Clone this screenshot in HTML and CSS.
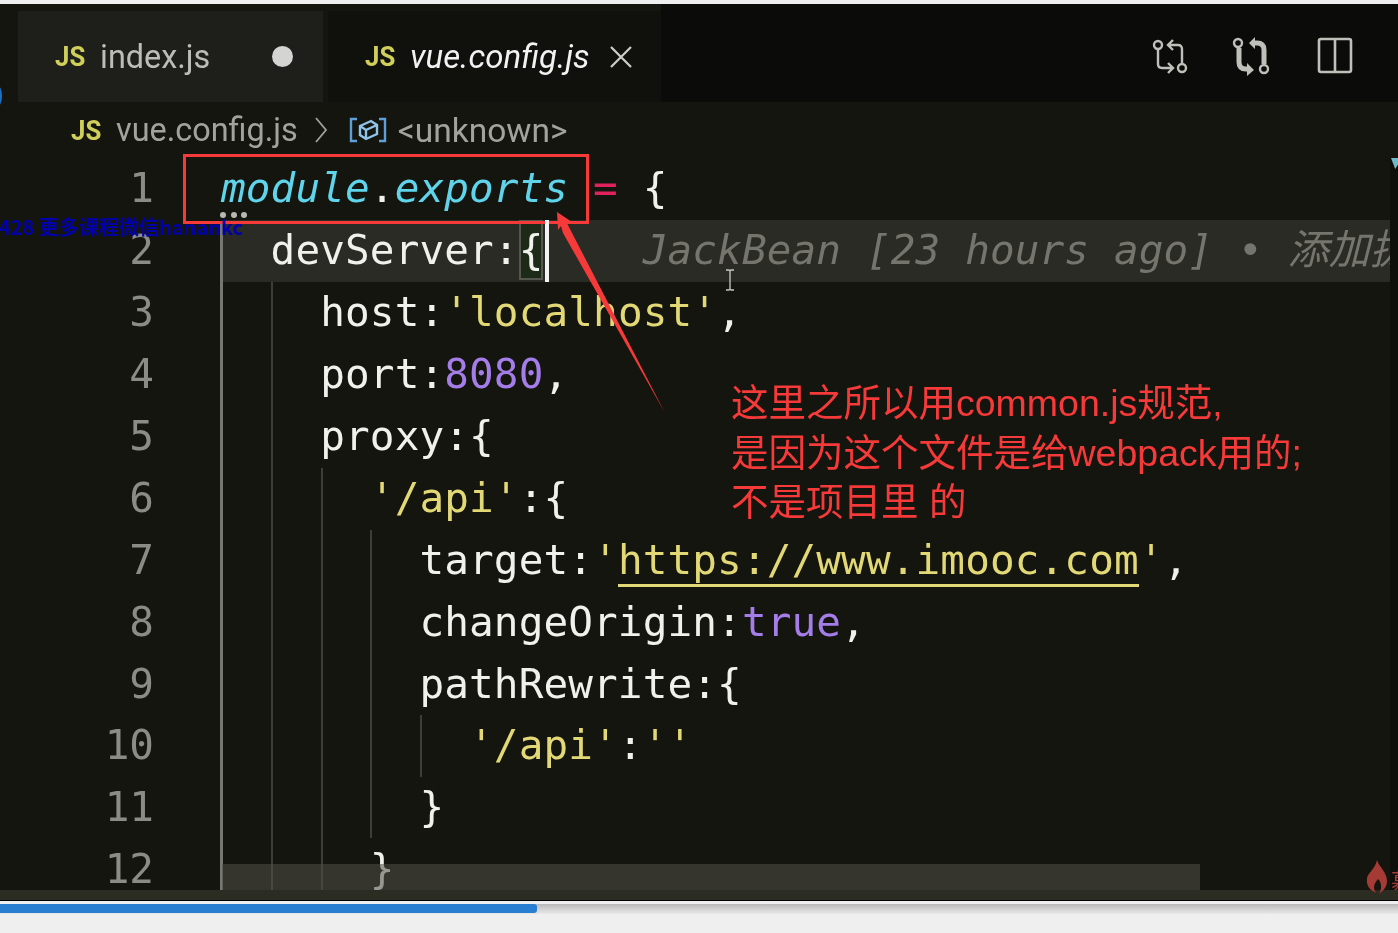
FILE: index.html
```html
<!DOCTYPE html>
<html lang="zh">
<head>
<meta charset="utf-8">
<title>vue.config.js</title>
<link rel="stylesheet" href="styles.css">
</head>
<body>
<main class="player">
  <section class="video">
    <header class="tabbar">
      <div class="tab tab-dirty">
        <span class="js">JS</span><span class="tab-name">index.js</span><span class="dot"></span>
      </div>
      <div class="tab tab-active">
        <span class="js">JS</span><span class="tab-name active-name">vue.config.js</span>
        <svg class="close" viewBox="0 0 24 24"><path d="M2 2 22 22M22 2 2 22"/></svg>
      </div>
      <div class="actions">
        <svg class="act" viewBox="0 0 36 36"><circle cx="5" cy="7" r="4"/><circle cx="29" cy="30" r="4"/><path d="M5 11V26Q5 30 9 30H20M15 25l5 5-5 5M29 26V11Q29 7 25 7H15M20 2l-5 5 5 5"/></svg>
        <svg class="act act-bold" viewBox="2 0 36 36"><circle class="thin" cx="5" cy="5" r="4"/><circle class="thin" cx="31" cy="31" r="4"/><path d="M6 10V24Q6 31 13 31H15M31 26V12Q31 5 24 5H22"/><path class="solid" d="M14 25 21 32 14 38ZM22 -1 16 5 22 11Z"/></svg>
        <svg class="act act-split" viewBox="0 0 36 36"><rect x="2" y="1" width="32" height="33" rx="2"/><path d="M18 1V34"/></svg>
      </div>
    </header>
    <nav class="crumbs">
      <span class="js">JS</span><span class="crumb-file">vue.config.js</span>
      <svg class="chev" viewBox="0 0 14 28"><path d="M2 2 12 14 2 26"/></svg>
      <svg class="sym" viewBox="0 0 38 26"><path class="sym-b" d="M8 2H2V24H8M30 2H36V24H30"/><path class="sym-c" d="M11 9 22 4 28 8V17L17 22 11 18ZM11 9 17 13 28 8M17 13V22"/></svg>
      <span class="crumb-sym">&lt;unknown&gt;</span>
    </nav>
    <div class="editor">
      <ol class="code">
        <li class="line"><span class="num">1</span><code><i class="mod">module</i><b class="pun">.</b><i class="mod">exports</i> <span class="eq">=</span> {</code></li>
        <li class="line line-cur"><span class="num">2</span><code>  devServer:<span class="brace">{</span><span class="ghost">    JackBean [23 hours ago] • 添加拢</span></code></li>
        <li class="line"><span class="num">3</span><code>    host:<span class="str">'localhost'</span>,</code></li>
        <li class="line"><span class="num">4</span><code>    port:<span class="val">8080</span>,</code></li>
        <li class="line"><span class="num">5</span><code>    proxy:{</code></li>
        <li class="line"><span class="num">6</span><code>      <span class="str">'/api'</span>:{</code></li>
        <li class="line"><span class="num">7</span><code>        target:<span class="str">'<u>https://www.imooc.com</u>'</span>,</code></li>
        <li class="line"><span class="num">8</span><code>        changeOrigin:<span class="val">true</span>,</code></li>
        <li class="line"><span class="num">9</span><code>        pathRewrite:{</code></li>
        <li class="line"><span class="num">10</span><code>          <span class="str">'/api'</span>:<span class="str">''</span></code></li>
        <li class="line"><span class="num">11</span><code>        }</code></li>
        <li class="line"><span class="num">12</span><code>      }</code></li>
      </ol>
      <div class="guide g0"></div>
      <div class="guide g1"></div>
      <div class="guide g2"></div>
      <div class="guide g3"></div>
      <div class="guide g4"></div>
      <div class="hscroll"></div>
      <div class="minimap"><span class="speck"></span></div>
    </div>
    <div class="statusbar"></div>

    <div class="redbox"></div>
    <div class="dots"><i></i><i></i><i></i></div>
    <div class="caret"></div>
    <svg class="ibeam" viewBox="0 0 10 22"><path d="M1 1H4Q5 1 5 3V19Q5 21 4 21H1M9 1H6Q5 1 5 3V19Q5 21 6 21H9"/></svg>
    <svg class="arrow" viewBox="0 0 1398 933"><path d="M557 212 572 222 567.4 224 664.5 412 563 233 561 226 558 230Z"/></svg>
    <p class="note">这里之所以用common.js规范,<br>是因为这个文件是给webpack用的;<br>不是项目里 的</p>
    <div class="mark">428 更多课程微信hanankc</div>
    <svg class="flame" viewBox="0 0 22 34"><path d="M11 0C13 7 21 12 21 21 21 27 17 31 13 34 16 29 16 23 12 19 9 23 6 27 10 33 4 30 0 26 1 18 2 13 9 9 11 0Z"/></svg>
    <div class="flame-txt">慕</div>
    <div class="blue-edge"></div>
  </section>
  <div class="progress"><div class="progress-fill"></div></div>
</main>
</body>
</html>
```
FILE: styles.css
```css
* { box-sizing: border-box; }
html, body { margin: 0; padding: 0; }
body { width: 1398px; height: 933px; background: #efefef; overflow: hidden; font-family: Roboto, "Noto Sans", sans-serif; }
.player { display: flex; flex-direction: column; height: 933px; padding-top: 4px; background: #efefef; }
.video { position: relative; height: 897px; background: #14150f; border-bottom: 1px solid #000; overflow: hidden; display: flex; flex-direction: column; filter: blur(.4px); }

.tabbar { display: flex; height: 98px; padding: 7px 0 0 18px; background: #14150f; flex: none; }
.tab { display: flex; align-items: center; height: 91px; font-size: 33px; }
.tab-dirty { width: 305px; padding: 0 30px 0 37px; background: #1e1f1a; color: #bdbdb7; font-size: 32.4px; }
.tab-active { width: 333px; margin-left: 5px; padding-left: 37px; background: #10110d; color: #f2f2f2; }
.tab-name { margin-left: 18px; }
.active-name { font-style: italic; }
.dot { width: 21px; height: 21px; border-radius: 50%; background: #d4d4d2; margin-left: auto; }
.close { width: 24px; height: 24px; margin-left: 19px; fill: none; stroke: #cfcfca; stroke-width: 2.2; }
.js { font-family: Roboto, sans-serif; font-weight: 700; font-size: 28px; width: 27px; color: #cfcf5a; display: inline-block; transform: scaleX(.92); transform-origin: left center; }
.actions { flex: 1; display: flex; justify-content: flex-end; align-items: center; gap: 46px; padding: 6px 45px 0 0; background: #0b0c09; margin-top: -7px; height: 98px; }
.act { width: 36px; height: 36px; fill: none; stroke: #c0c0bb; stroke-width: 2.4; overflow: visible; }
.act-bold { stroke-width: 5; }
.act-bold .thin { stroke-width: 2.4; }
.act-bold .solid { fill: #c0c0bb; stroke: none; }
.act-split { stroke-width: 2.6; }

.crumbs { display: flex; align-items: center; height: 56px; padding-left: 71px; font-size: 32.4px; color: #a3a39e; flex: none; }
.crumb-file { margin-left: 18px; }
.crumb-sym { font-size: 33.5px; }
.chev { width: 14px; height: 28px; margin-left: 16px; fill: none; stroke: #a3a39e; stroke-width: 1.8; }
.sym { width: 38px; height: 26px; margin: 0 11px 0 21px; fill: none; stroke-width: 2.4; }
.sym-b { stroke: #5f9fd8; }
.sym-c { stroke: #8fc4ea; }

.editor { position: relative; height: 732px; flex: none; overflow: hidden; }
.code { list-style: none; margin: 0; padding: 0; }
.line { display: flex; height: 61.95px; line-height: 61.95px; font-family: "DejaVu Sans Mono", monospace; font-size: 41px; color: #f0f0ec; white-space: pre; }
.line code { position: relative; font: inherit; margin-left: 67px; letter-spacing: .12px; }
.num { position: relative; width: 154px; flex: none; text-align: right; color: #8c8c86; }
.line-cur { position: relative; }
.line-cur::before { content: ""; position: absolute; left: 222px; right: 0; top: 0; height: 62px; background: #2a2b25; }
.mod { color: #5fd4ea; font-style: italic; }
.pun { font-weight: 400; }
.eq { color: #e0225f; }
.str, .str u { color: #e3d876; }
.str u { text-decoration: none; border-bottom: 3px solid #e3d876; }
.val { color: #a47de8; }
.brace { display: inline-block; height: 60px; line-height: 60px; outline: 2px solid #55574f; outline-offset: -2px; background: #1c2a17; }
.ghost { color: #75756e; font-style: italic; font-family: "DejaVu Sans Mono", "Noto Sans CJK SC", monospace; }

.guide { position: absolute; width: 2px; background: #3d3e38; }
.g0 { left: 220px; top: 64px; height: 668px; width: 3px; background: #77776f; }
.g1 { left: 271px; top: 124px; height: 608px; }
.g2 { left: 321px; top: 310px; height: 422px; }
.g3 { left: 370px; top: 372px; height: 308px; }
.g4 { left: 420px; top: 557px; height: 62px; }
.hscroll { position: absolute; left: 222px; top: 706px; width: 978px; height: 26px; background: rgba(80, 80, 72, .55); }
.minimap { position: absolute; right: 0; top: 0; width: 8px; height: 732px; background: #0e0f0b; }
.speck { display: block; width: 7px; height: 11px; margin: 0 0 0 1px; background: #6fb9c9; clip-path: polygon(0 0, 100% 0, 100% 60%, 60% 100%); }

.statusbar { flex: 1; background: #2b2c22; }

.redbox { position: absolute; left: 183px; top: 150px; width: 406px; height: 70px; border: 3px solid #f63a3a; }
.dots { position: absolute; left: 220px; top: 208px; display: flex; gap: 4.5px; }
.dots i { width: 6px; height: 6px; border-radius: 50%; background: #b9b9b2; }
.caret { position: absolute; left: 545px; top: 216px; width: 4px; height: 62px; background: #f4f4f4; }
.ibeam { position: absolute; left: 725px; top: 265px; width: 10px; height: 22px; fill: none; stroke: #c9c9c3; stroke-width: 1.3; }
.arrow { position: absolute; left: 0; top: -4px; width: 1398px; height: 933px; fill: #f63a3a; }
.note { position: absolute; left: 731px; top: 375px; margin: 0; font-family: "Liberation Sans", "Noto Sans CJK SC", sans-serif; font-size: 37.5px; line-height: 49.5px; color: #f63a3a; white-space: nowrap; }
.mark { position: absolute; left: -1px; top: 211px; font-family: "Noto Sans CJK SC", sans-serif; font-weight: 700; font-size: 20px; line-height: 24px; color: #0202a8; white-space: nowrap; }
.flame { position: absolute; left: 1366px; top: 856px; width: 22px; height: 34px; fill: #a63a35; }
.flame-txt { position: absolute; left: 1391px; top: 862px; font-family: "Noto Sans CJK SC", sans-serif; font-size: 22px; line-height: 26px; color: #a63a35; }
.blue-edge { position: absolute; left: -8px; top: 81px; width: 10px; height: 22px; border-radius: 50%; background: #1f6fc4; }

.progress { height: 10px; margin-top: 3px; background: linear-gradient(#b9b9b9, #e9e9e9); flex: none; }
.progress-fill { width: 537px; height: 9px; border-radius: 0 3px 3px 0; background: #2a7ed2; }
```
